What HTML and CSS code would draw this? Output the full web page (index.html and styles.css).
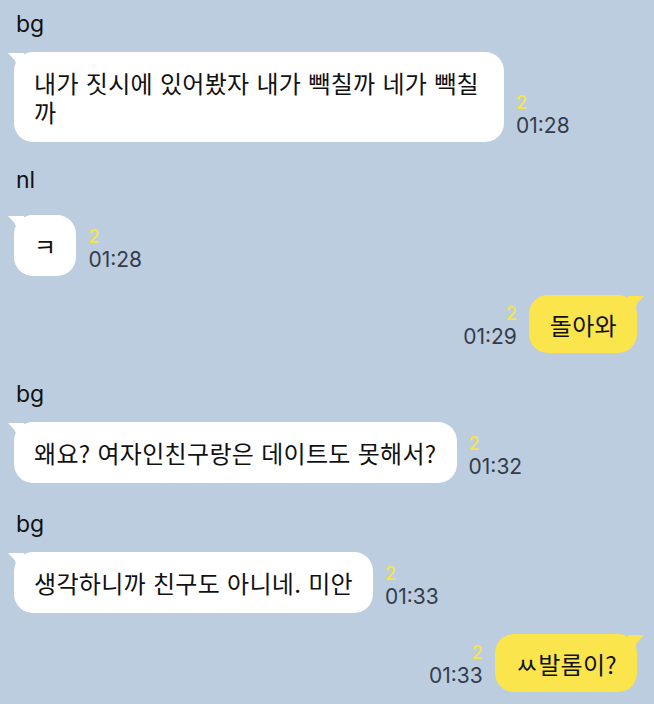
FILE: index.html
```html
<!DOCTYPE html>
<html lang="ko">
<head>
<meta charset="utf-8">
<link rel="stylesheet" href="styles.css">
</head>
<body>
<div class="chat">
  <div class="group group-first">
    <div class="name">bg</div>
    <div class="row">
      <div class="bubble in">내가 짓시에 있어봤자 내가 빽칠까 네가 빽칠까</div>
      <div class="meta"><span class="unread">2</span><span class="time">01:28</span></div>
    </div>
  </div>
  <div class="group group-nl before-mine">
    <div class="name">nl</div>
    <div class="row">
      <div class="bubble in">ㅋ</div>
      <div class="meta"><span class="unread">2</span><span class="time">01:28</span></div>
    </div>
  </div>
  <div class="group mine">
    <div class="row">
      <div class="meta"><span class="unread">2</span><span class="time">01:29</span></div>
      <div class="bubble out">돌아와</div>
    </div>
  </div>
  <div class="group">
    <div class="name">bg</div>
    <div class="row">
      <div class="bubble in">왜요? 여자인친구랑은 데이트도 못해서?</div>
      <div class="meta"><span class="unread">2</span><span class="time">01:32</span></div>
    </div>
  </div>
  <div class="group before-mine">
    <div class="name">bg</div>
    <div class="row">
      <div class="bubble in">생각하니까 친구도 아니네. 미안</div>
      <div class="meta"><span class="unread">2</span><span class="time">01:33</span></div>
    </div>
  </div>
  <div class="group mine">
    <div class="row">
      <div class="meta"><span class="unread">2</span><span class="time">01:33</span></div>
      <div class="bubble out">ㅆ발롬이?</div>
    </div>
  </div>
</div>
</body>
</html>
```
FILE: styles.css
```css
html, body {
  margin: 0;
  padding: 0;
  background: #bdcde0;
}
body {
  font-family: Inter, "Noto Sans CJK KR", sans-serif;
  color: #111;
  height: 704px;
  overflow: hidden;
}
.chat {
  display: flex;
  flex-direction: column;
  padding: 10px 17px 0 14px;
}
.group {
  display: flex;
  flex-direction: column;
  margin-bottom: 27px;
}
.group.group-first {
  margin-bottom: 24px;
}
.group.before-mine {
  margin-bottom: 21px;
}
.group.group-nl {
  margin-bottom: 19px;
}
.group.mine {
  align-items: flex-end;
  margin-bottom: 27px;
}
.name {
  font-size: 23px;
  line-height: 28px;
  padding-left: 2px;
  margin-bottom: 14px;
}
.group-nl .name {
  margin-bottom: 21px;
}
.row {
  display: flex;
  align-items: flex-end;
  gap: 12px;
}
.bubble {
  position: relative;
  font-family: "Noto Sans CJK KR", sans-serif;
  font-size: 24px;
  letter-spacing: 0.3px;
  line-height: 29px;
  padding: 16px 20px;
  border-radius: 19px;
  max-width: 490px;
  box-sizing: border-box;
}
.bubble.in {
  background: #ffffff;
}
.bubble.out {
  background: #fbe54d;
  padding: 15px 20px 14px 21px;
}
.bubble.in::before,
.bubble.out::before {
  content: "";
  position: absolute;
  top: 1px;
  width: 16px;
  height: 15px;
}
.bubble.in::before {
  left: -6px;
  background: #ffffff;
  clip-path: polygon(0 0, 100% 0, 100% 100%, 55% 80%, 40% 45%);
}
.bubble.out::before {
  right: -7px;
  background: #fbe54d;
  clip-path: polygon(100% 0, 0 0, 0 100%, 45% 80%, 60% 45%);
}
.meta {
  display: flex;
  flex-direction: column;
  align-items: flex-start;
  padding-bottom: 4px;
}
.mine .meta {
  align-items: flex-end;
}
.unread {
  color: #f4e548;
  font-size: 18px;
  font-weight: 500;
  line-height: 22px;
}
.time {
  color: #343c4a;
  font-size: 21px;
  line-height: 24px;
}
```
